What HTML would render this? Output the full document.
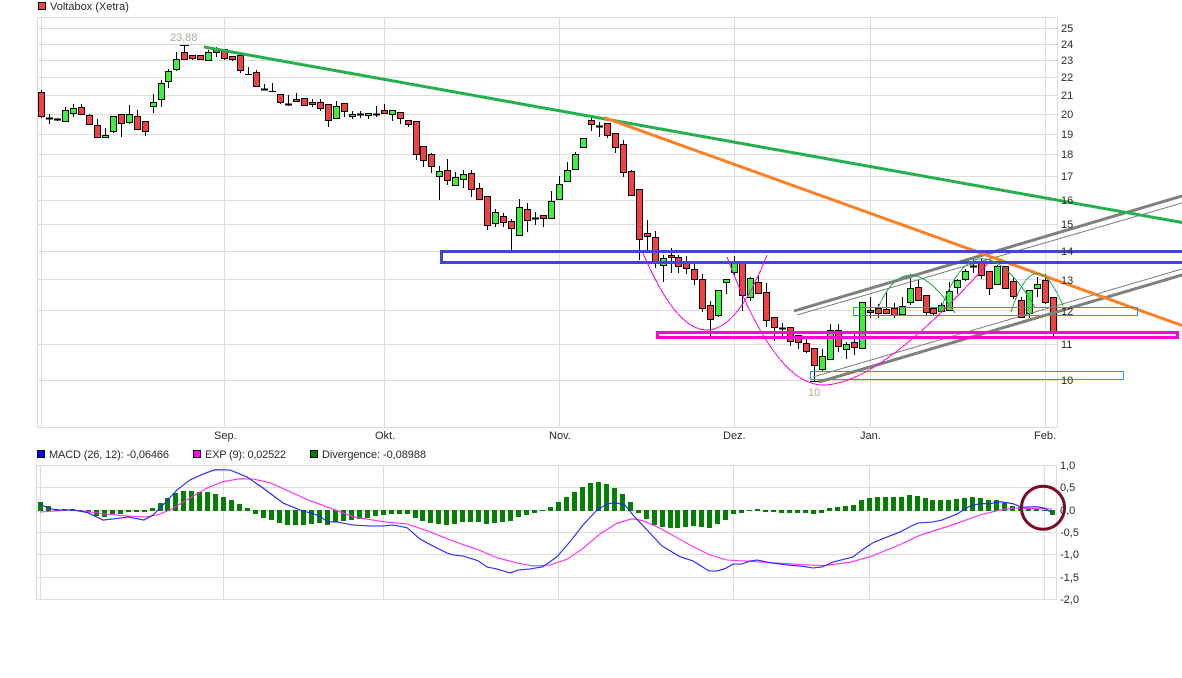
<!DOCTYPE html>
<html><head><meta charset="utf-8"><title>Voltabox (Xetra)</title>
<style>html,body{margin:0;padding:0;background:#fff}svg{display:block}text{font-family:"Liberation Sans",sans-serif;font-size:11px;fill:#2a2a2a}</style></head>
<body>
<svg width="1182" height="678" viewBox="0 0 1182 678" xmlns="http://www.w3.org/2000/svg">
<g shape-rendering="crispEdges" fill="none">
<path stroke="#dcdcdc" d="M37.5 17.5H1057.5V427.5H37.5ZM41.5 17V427M224.5 17V427M384.5 17V427M559.5 17V427M734.5 17V427M870.5 17V427M1045.5 17V427M37 28.5H1057M37 44.5H1057M37 60.5H1057M37 77.5H1057M37 95.5H1057M37 114.5H1057M37 134.5H1057M37 154.5H1057M37 176.5H1057M37 200.5H1057M37 224.5H1057M37 251.5H1057M37 279.5H1057M37 310.5H1057M37 344.5H1057M37 380.5H1057"/>
<path stroke="#dcdcdc" d="M36.5 465.5H1056.5V599.5H36.5ZM40.5 465V599M223.5 465V599M383.5 465V599M558.5 465V599M733.5 465V599M869.5 465V599M1044.5 465V599M36 487.5H1056M36 510.5H1056M36 532.5H1056M36 554.5H1056M36 577.5H1056"/>
<!-- wicks -->
<path stroke="#000" d="M41.5 90V118M49.5 114V124M57.5 118V121M65.5 107V122M73.5 104V117M81.5 104V115M89.5 114V125M97.5 119V138M105.5 128V138M113.5 116V133M121.5 114V137M129.5 105V124M137.5 110V130M145.5 121V136M153.5 94V113M161.5 80V107M168.5 69V88M176.5 52V71M184.5 45V60M180 45.5H189M192.5 55V60M200.5 55V60M208.5 50V61M216.5 47V57M224.5 49V60M232.5 56V61M240.5 55V73M248.5 67V75M245 74.5H252M256.5 70V87M264.5 84V90M272.5 83V91M269 91.5H276M280.5 94V104M288.5 95V106M296.5 93V102M312.5 99V107M320.5 99V111M328.5 104V127M336.5 101V119M344.5 103V117M352.5 111V119M360.5 111V118M368.5 113V119M376.5 106V117M384.5 104V114M392.5 110V121M400.5 112V124M408.5 120V127M416.5 121V160M423.5 146V167M431.5 153V173M439.5 166V200M447.5 159V185M455.5 172V186M463.5 170V188M471.5 170V197M479.5 183V200M487.5 196V230M495.5 209V227M503.5 213V227M511.5 219V250M519.5 199V236M527.5 203V232M535.5 212V225M543.5 215V227M551.5 191V219M559.5 176V200M567.5 162V182M575.5 152V170M583.5 138V148M591.5 118V131M599.5 122V137M607.5 123V138M615.5 133V153M623.5 140V177M631.5 170V196M639.5 189V260M647.5 220V252M655.5 231V268M663.5 255V282M671.5 248V273M678.5 255V273M686.5 256V274M694.5 263V285M702.5 274V312M710.5 301V336M718.5 290V317M726.5 279V294M734.5 256V277M742.5 262V311M750.5 277V301M758.5 275V294M766.5 283V327M774.5 317V341M782.5 323V337M790.5 327V346M798.5 335V349M806.5 339V353M814.5 348V381M810 381.5H819M822.5 349V371M830.5 324V360M838.5 324V352M846.5 342V359M854.5 334V355M870.5 297V318M878.5 304V318M886.5 292V314M894.5 303V318M902.5 297V315M910.5 274V305M918.5 280V301M926.5 295V316M933.5 308V315M941.5 303V312M949.5 282V311M957.5 279V294M965.5 269V281M973.5 259V273M981.5 259V279M989.5 271V295M997.5 265V285M1013.5 277V299M1021.5 297V318M1029.5 290V318M1037.5 277V297M1045.5 274V304M1053.5 297V336"/>
<!-- dojis -->
<path stroke="#000" stroke-width="2" d="M46 118.5H53M54 119.5H61M261 89.5H268M285 104.5H292M357 114.5H364M373 114.5H380M532 218.5H539M596 126.5H603M779 328.5H786M970 266.5H977"/>
<!-- red bodies -->
<path fill="#f44040" stroke="#000" d="M38.5 92.5h6v24h-6zM78.5 107.5h6v7h-6zM86.5 115.5h6v9h-6zM94.5 125.5h6v12h-6zM118.5 114.5h6v9h-6zM134.5 116.5h6v13h-6zM142.5 121.5h6v10h-6zM181.5 52.5h6v7h-6zM189.5 55.5h6v3h-6zM197.5 55.5h6v4h-6zM213.5 49.5h6v3h-6zM221.5 49.5h6v9h-6zM229.5 56.5h6v3h-6zM237.5 55.5h6v15h-6zM253.5 72.5h6v14h-6zM277.5 94.5h6v8h-6zM293.5 99.5h6v2h-6zM301.5 98.5h6v7h-6zM309.5 102.5h6v2h-6zM317.5 102.5h6v6h-6zM325.5 104.5h6v16h-6zM341.5 103.5h6v8h-6zM381.5 110.5h6v3h-6zM397.5 112.5h6v6h-6zM405.5 120.5h6v4h-6zM413.5 121.5h6v33h-6zM420.5 146.5h6v14h-6zM428.5 154.5h6v12h-6zM444.5 170.5h6v10h-6zM468.5 173.5h6v16h-6zM476.5 188.5h6v11h-6zM484.5 196.5h6v29h-6zM500.5 216.5h6v6h-6zM508.5 221.5h6v7h-6zM524.5 209.5h6v11h-6zM540.5 215.5h6v3h-6zM588.5 120.5h6v4h-6zM604.5 123.5h6v12h-6zM612.5 133.5h6v14h-6zM620.5 144.5h6v28h-6zM628.5 171.5h6v24h-6zM636.5 189.5h6v50h-6zM644.5 233.5h6v3h-6zM652.5 237.5h6v25h-6zM668.5 255.5h6v2h-6zM675.5 257.5h6v9h-6zM683.5 262.5h6v6h-6zM691.5 269.5h6v10h-6zM699.5 279.5h6v29h-6zM707.5 305.5h6v14h-6zM739.5 262.5h6v33h-6zM755.5 282.5h6v11h-6zM763.5 292.5h6v28h-6zM771.5 317.5h6v10h-6zM787.5 327.5h6v14h-6zM795.5 335.5h6v7h-6zM803.5 343.5h6v8h-6zM811.5 348.5h6v17h-6zM835.5 330.5h6v16h-6zM851.5 342.5h6v5h-6zM867.5 310.5h6v2h-6zM875.5 308.5h6v5h-6zM883.5 309.5h6v4h-6zM891.5 308.5h6v7h-6zM915.5 287.5h6v13h-6zM923.5 295.5h6v17h-6zM930.5 308.5h6v5h-6zM978.5 263.5h6v12h-6zM986.5 271.5h6v17h-6zM1002.5 266.5h6v22h-6zM1010.5 281.5h6v15h-6zM1018.5 300.5h6v17h-6zM1042.5 280.5h6v22h-6zM1050.5 297.5h6v36h-6z"/>
<!-- green bodies -->
<path fill="#3cf03c" stroke="#000" d="M62.5 110.5h6v11h-6zM70.5 108.5h6v5h-6zM102.5 135.5h6v2h-6zM110.5 116.5h6v15h-6zM126.5 114.5h6v8h-6zM150.5 102.5h6v4h-6zM158.5 83.5h6v16h-6zM165.5 71.5h6v10h-6zM173.5 59.5h6v10h-6zM205.5 52.5h6v8h-6zM333.5 106.5h6v12h-6zM349.5 114.5h6v2h-6zM365.5 113.5h6v2h-6zM389.5 110.5h6v4h-6zM436.5 171.5h6v5h-6zM452.5 177.5h6v8h-6zM460.5 174.5h6v5h-6zM492.5 212.5h6v11h-6zM516.5 207.5h6v28h-6zM548.5 201.5h6v17h-6zM556.5 184.5h6v15h-6zM564.5 170.5h6v11h-6zM572.5 154.5h6v15h-6zM580.5 138.5h6v9h-6zM660.5 258.5h6v7h-6zM715.5 290.5h6v25h-6zM723.5 279.5h6v3h-6zM731.5 262.5h6v10h-6zM747.5 278.5h6v19h-6zM819.5 356.5h6v13h-6zM827.5 330.5h6v29h-6zM843.5 344.5h6v5h-6zM859.5 302.5h6v46h-6zM899.5 306.5h6v8h-6zM907.5 288.5h6v14h-6zM938.5 305.5h6v6h-6zM946.5 291.5h6v19h-6zM954.5 280.5h6v7h-6zM962.5 271.5h6v8h-6zM994.5 266.5h6v18h-6zM1026.5 290.5h6v23h-6zM1034.5 284.5h6v4h-6z"/>
<!-- channel and trend lines -->
<path stroke="#808080" stroke-width="3" d="M794 311L1182 196M819 382L1182 275"/>
<path stroke="#808080" stroke-width="1" d="M797 315L1182 203M813 377L1182 269"/>
<path stroke="#22b14c" stroke-width="3" d="M204 47L1182 222.5"/>
<path stroke="#ff7f27" stroke-width="3" d="M604 117.5L1182 325.5"/>
<path stroke="#3f48cc" stroke-width="3" d="M1182 251.5H441.5V262.5H1182"/>
<path stroke="#ff00e0" stroke-width="3" d="M657.5 332.5H1177.5V337.5H657.5Z"/>
<path stroke="#1e9ad6" d="M1137.5 307.5H853.5V315.5H1137.5ZM1123.5 371.5H810.5V379.5H1123.5Z"/>
<path stroke="#ff00e0" d="M643 253Q708 406 767 255"/>
<path stroke="#ff00e0" d="M727 257Q775 385 823 385Q880 385 991 260"/>
<path stroke="#22a84b" d="M878 308Q907 240 955 313M940 312Q975 208 1035 307M1011 312Q1035 238 1063 306"/>
<!-- MACD bars -->
<path fill="#047f04" stroke="none" d="M38 502h5v9h-5zM46 506h5v5h-5zM54 509h5v2h-5zM62 509h5v2h-5zM70 509h5v2h-5zM78 510h5v1h-5zM86 510h5v2h-5zM94 510h5v6h-5zM102 510h5v7h-5zM110 510h5v4h-5zM118 510h5v4h-5zM126 510h5v2h-5zM134 510h5v2h-5zM142 510h5v2h-5zM150 508h5v3h-5zM158 503h5v8h-5zM165 498h5v13h-5zM173 493h5v18h-5zM181 491h5v20h-5zM189 491h5v20h-5zM197 492h5v19h-5zM205 492h5v19h-5zM213 494h5v17h-5zM221 497h5v14h-5zM229 500h5v11h-5zM237 504h5v7h-5zM245 508h5v3h-5zM253 510h5v4h-5zM261 510h5v8h-5zM269 510h5v10h-5zM277 510h5v13h-5zM285 510h5v15h-5zM293 510h5v15h-5zM301 510h5v15h-5zM309 510h5v14h-5zM317 510h5v13h-5zM325 510h5v15h-5zM333 510h5v12h-5zM341 510h5v11h-5zM349 510h5v10h-5zM357 510h5v9h-5zM365 510h5v8h-5zM373 510h5v6h-5zM381 510h5v5h-5zM389 510h5v4h-5zM397 510h5v4h-5zM405 510h5v4h-5zM413 510h5v8h-5zM420 510h5v11h-5zM428 510h5v13h-5zM436 510h5v14h-5zM444 510h5v15h-5zM452 510h5v14h-5zM460 510h5v12h-5zM468 510h5v12h-5zM476 510h5v12h-5zM484 510h5v14h-5zM492 510h5v13h-5zM500 510h5v12h-5zM508 510h5v11h-5zM516 510h5v7h-5zM524 510h5v5h-5zM532 510h5v3h-5zM540 510h5v1h-5zM548 507h5v4h-5zM556 502h5v9h-5zM564 497h5v14h-5zM572 492h5v19h-5zM580 487h5v24h-5zM588 483h5v28h-5zM596 482h5v29h-5zM604 484h5v27h-5zM612 488h5v23h-5zM620 494h5v17h-5zM628 502h5v9h-5zM636 510h5v3h-5zM644 510h5v9h-5zM652 510h5v15h-5zM660 510h5v17h-5zM668 510h5v18h-5zM675 510h5v18h-5zM683 510h5v17h-5zM691 510h5v16h-5zM699 510h5v17h-5zM707 510h5v18h-5zM715 510h5v14h-5zM723 510h5v10h-5zM731 510h5v4h-5zM739 510h5v3h-5zM747 510h5v1h-5zM755 509h5v2h-5zM763 510h5v2h-5zM771 510h5v2h-5zM779 510h5v3h-5zM787 510h5v3h-5zM795 510h5v3h-5zM803 510h5v3h-5zM811 510h5v4h-5zM819 510h5v3h-5zM827 508h5v3h-5zM835 507h5v4h-5zM843 506h5v5h-5zM851 505h5v6h-5zM859 500h5v11h-5zM867 498h5v13h-5zM875 497h5v14h-5zM883 497h5v14h-5zM891 497h5v14h-5zM899 497h5v14h-5zM907 495h5v16h-5zM915 496h5v15h-5zM923 498h5v13h-5zM930 500h5v11h-5zM938 500h5v11h-5zM946 500h5v11h-5zM954 499h5v12h-5zM962 498h5v13h-5zM970 497h5v14h-5zM978 498h5v13h-5zM986 500h5v11h-5zM994 500h5v11h-5zM1002 503h5v8h-5zM1010 506h5v5h-5zM1018 507h5v4h-5zM1026 509h5v2h-5zM1034 509h5v2h-5zM1042 510h5v1h-5zM1050 510h5v5h-5z"/>
<!-- legend squares -->
<rect x="38.5" y="2.5" width="7" height="7" fill="#f44040" stroke="#000"/>
<rect x="37.5" y="450.5" width="7" height="7" fill="#0000ff" stroke="#000"/>
<rect x="193.5" y="450.5" width="7" height="7" fill="#ff00ff" stroke="#000"/>
<rect x="310.5" y="450.5" width="7" height="7" fill="#008000" stroke="#000"/>
</g>
<!-- MACD lines -->
<polyline fill="none" stroke="#ff2cf5" stroke-width="1.1" points="40,512 55,511 73,510 88,511.7 105,514 127,516 145,517 157,515 170,510 190,498 207,488 223,481.7 240,478.7 253,479 270,482.7 290,491.7 310,500.7 320,504.3 337,510.7 353,516.7 383,521.7 407,524 427,530.7 453,541 477,549.3 497,557.7 517,563 533,566 550,565 567,559.3 583,548.3 600,534 617,523.3 632,518.7 643,520.7 660,528.3 680,539.3 690,545 710,555 727,560 750,561.3 780,563.3 810,565 823,565.7 850,562.3 870,556.7 897,546 920,535.3 957,523.3 980,515 1003,509.3 1017,508 1037,508.7 1052,509"/>
<polyline fill="none" stroke="#2020ff" stroke-width="1.1" points="40.3,504.3 48,508 56,510 73,510 88,512.7 103,520 113,519 128,517 144,520 153,515 163,505 177,490 190,480 203,474 215,469.7 230,470 247,477 263,488 283,503 300,510 317,515 328,521.7 337,522 353,525 370,526 383,526 393,525 407,527.7 420,539 433,546 447,553 453,555 463,556 478,560.7 487,567 497,569 510,573 518,570 530,569 543,566.7 557,556.7 570,541.7 583,525 597,510 607,504 615,502.7 625,505 633,515 647,530 662,546 680,556.7 693,561 709,571 717,571 725,568.7 733,564 742,564 750,561 757,560 770,562.7 787,565 803,566.3 813,568 822,567 833,562 853,557 862,550 873,542.7 887,537 900,532 912,525.7 918,523 933,522 942,520 957,514 970,506 980,503.7 990,503.7 1000,501.7 1013,503.7 1022,507.3 1037,506.7 1045,508.3 1052,513"/>
<circle cx="1043" cy="507.7" r="21.5" fill="none" stroke="#7b0a25" stroke-width="3"/>
<!-- labels -->
<text x="50" y="10">Voltabox (Xetra)</text>
<text x="170" y="41" style="fill:#b0a8a0">23,88</text>
<text x="808" y="396" style="fill:#bda88c">10</text>
<text x="1061" y="32">25</text><text x="1061" y="48">24</text><text x="1061" y="64">23</text><text x="1061" y="81">22</text><text x="1061" y="99">21</text><text x="1061" y="118">20</text><text x="1061" y="138">19</text><text x="1061" y="158">18</text><text x="1061" y="180">17</text><text x="1061" y="204">16</text><text x="1061" y="228">15</text><text x="1061" y="255">14</text><text x="1061" y="284">13</text><text x="1061" y="315">12</text><text x="1061" y="348">11</text><text x="1061" y="384">10</text>
<text x="214" y="439">Sep.</text><text x="375" y="439">Okt.</text><text x="549" y="439">Nov.</text><text x="723" y="439">Dez.</text><text x="860" y="439">Jan.</text><text x="1034" y="439">Feb.</text>
<text x="49" y="458" textLength="120" lengthAdjust="spacing">MACD (26, 12): -0,06466</text><text x="205" y="458" textLength="81" lengthAdjust="spacing">EXP (9): 0,02522</text><text x="322" y="458" textLength="104" lengthAdjust="spacing">Divergence: -0,08988</text>
<text x="1060" y="469">1,0</text><text x="1060" y="491">0,5</text><text x="1060" y="514">0,0</text><text x="1060" y="536">-0,5</text><text x="1060" y="558">-1,0</text><text x="1060" y="581">-1,5</text><text x="1060" y="603">-2,0</text>
</svg>
</body></html>
